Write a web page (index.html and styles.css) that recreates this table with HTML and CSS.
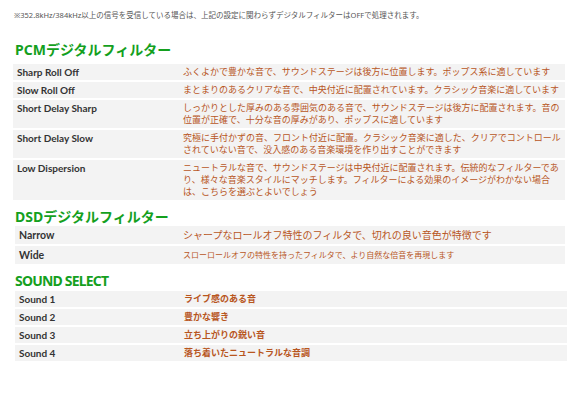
FILE: index.html
```html
<!DOCTYPE html>
<html lang="ja">
<head>
<meta charset="utf-8">
<link rel="stylesheet" href="styles.css">
</head>
<body>
<div class="page">
  <p class="note">※352.8kHz/384kHz以上の信号を受信している場合は、上記の設定に関わらずデジタルフィルターはOFFで処理されます。</p>

  <h2 class="heading heading-pcm">PCMデジタルフィルター</h2>
  <table class="spec spec-pcm">
    <tr><th>Sharp Roll Off</th><td>ふくよかで豊かな音で、サウンドステージは後方に位置します。ポップス系に適しています</td></tr>
    <tr><th>Slow Roll Off</th><td>まとまりのあるクリアな音で、中央付近に配置されています。クラシック音楽に適しています</td></tr>
    <tr><th>Short Delay Sharp</th><td>しっかりとした厚みのある雰囲気のある音で、サウンドステージは後方に配置されます。音の位置が正確で、十分な音の厚みがあり、ポップスに適しています</td></tr>
    <tr><th>Short Delay Slow</th><td>究極に手付かずの音、フロント付近に配置。クラシック音楽に適した、クリアでコントロールされていない音で、没入感のある音楽環境を作り出すことができます</td></tr>
    <tr><th>Low Dispersion</th><td>ニュートラルな音で、サウンドステージは中央付近に配置されます。伝統的なフィルターであり、様々な音楽スタイルにマッチします。フィルターによる効果のイメージがわかない場合は、こちらを選ぶとよいでしょう</td></tr>
  </table>

  <h2 class="heading heading-dsd">DSDデジタルフィルター</h2>
  <table class="spec spec-dsd">
    <tr><th>Narrow</th><td class="desc-large">シャープなロールオフ特性のフィルタで、切れの良い音色が特徴です</td></tr>
    <tr><th>Wide</th><td class="desc-small">スローロールオフの特性を持ったフィルタで、より自然な倍音を再現します</td></tr>
  </table>

  <h2 class="heading heading-sound">SOUND SELECT</h2>
  <table class="spec spec-sound">
    <tr><th>Sound 1</th><td>ライブ感のある音</td></tr>
    <tr><th>Sound 2</th><td>豊かな響き</td></tr>
    <tr><th>Sound 3</th><td>立ち上がりの鋭い音</td></tr>
    <tr><th>Sound 4</th><td>落ち着いたニュートラルな音調</td></tr>
  </table>
</div>
</body>
</html>
```

FILE: styles.css
```css
* { box-sizing: border-box; }
html, body { margin: 0; padding: 0; background: #fff; }
body {
  font-family: "Noto Sans", "Noto Sans CJK JP", sans-serif;
  color: #333;
}
.page {
  padding: 10px 0 0 13px;
  width: 579px;
}
.note {
  margin: 0;
  font-size: 7.5px;
  line-height: 11px;
  color: #555;
  padding-left: 1px;
}
.heading {
  margin: 0;
  font-family: "Noto Sans", "Noto Sans CJK JP", sans-serif;
  font-weight: 700;
  font-size: 14px;
  line-height: 18px;
  color: #14a01e;
  padding-left: 2px;
}
.heading-pcm { margin-top: 20px; margin-bottom: 5px; }
.heading-dsd { margin-top: 8px; margin-bottom: 0; }
.heading-sound { margin-top: 8px; margin-bottom: 1px; letter-spacing: -0.8px; }
.spec {
  border-collapse: collapse;
  background: #f3f3f3;
  width: 552px;
}
.spec-dsd { margin-left: 2px; width: 550px; }
.spec-sound { margin-left: 2px; width: 552px; }
.spec th, .spec td {
  vertical-align: top;
  text-align: left;
  padding: 2px 4px 2px 4px;
  border-top: 2px solid #fff;
  line-height: 12px;
}
.spec tr:first-child th, .spec tr:first-child td { border-top: none; }
.spec th {
  width: 170px;
  font-family: "Lato", "Noto Sans CJK JP", sans-serif;
  font-size: 10px;
  font-weight: 700;
  color: #333;
}
.spec td {
  font-size: 9px;
  color: #b8561e;
  padding-left: 0;
  padding-right: 2px;
}
.spec-dsd th { font-size: 10.5px; line-height: 14px; width: 168px; }
.spec-dsd td { line-height: 14px; }
.spec-dsd td.desc-large { font-size: 10px; }
.spec-dsd td.desc-small { font-size: 8px; }
.spec-sound th { width: 169px; }
.spec-sound td { font-weight: 700; }
```
